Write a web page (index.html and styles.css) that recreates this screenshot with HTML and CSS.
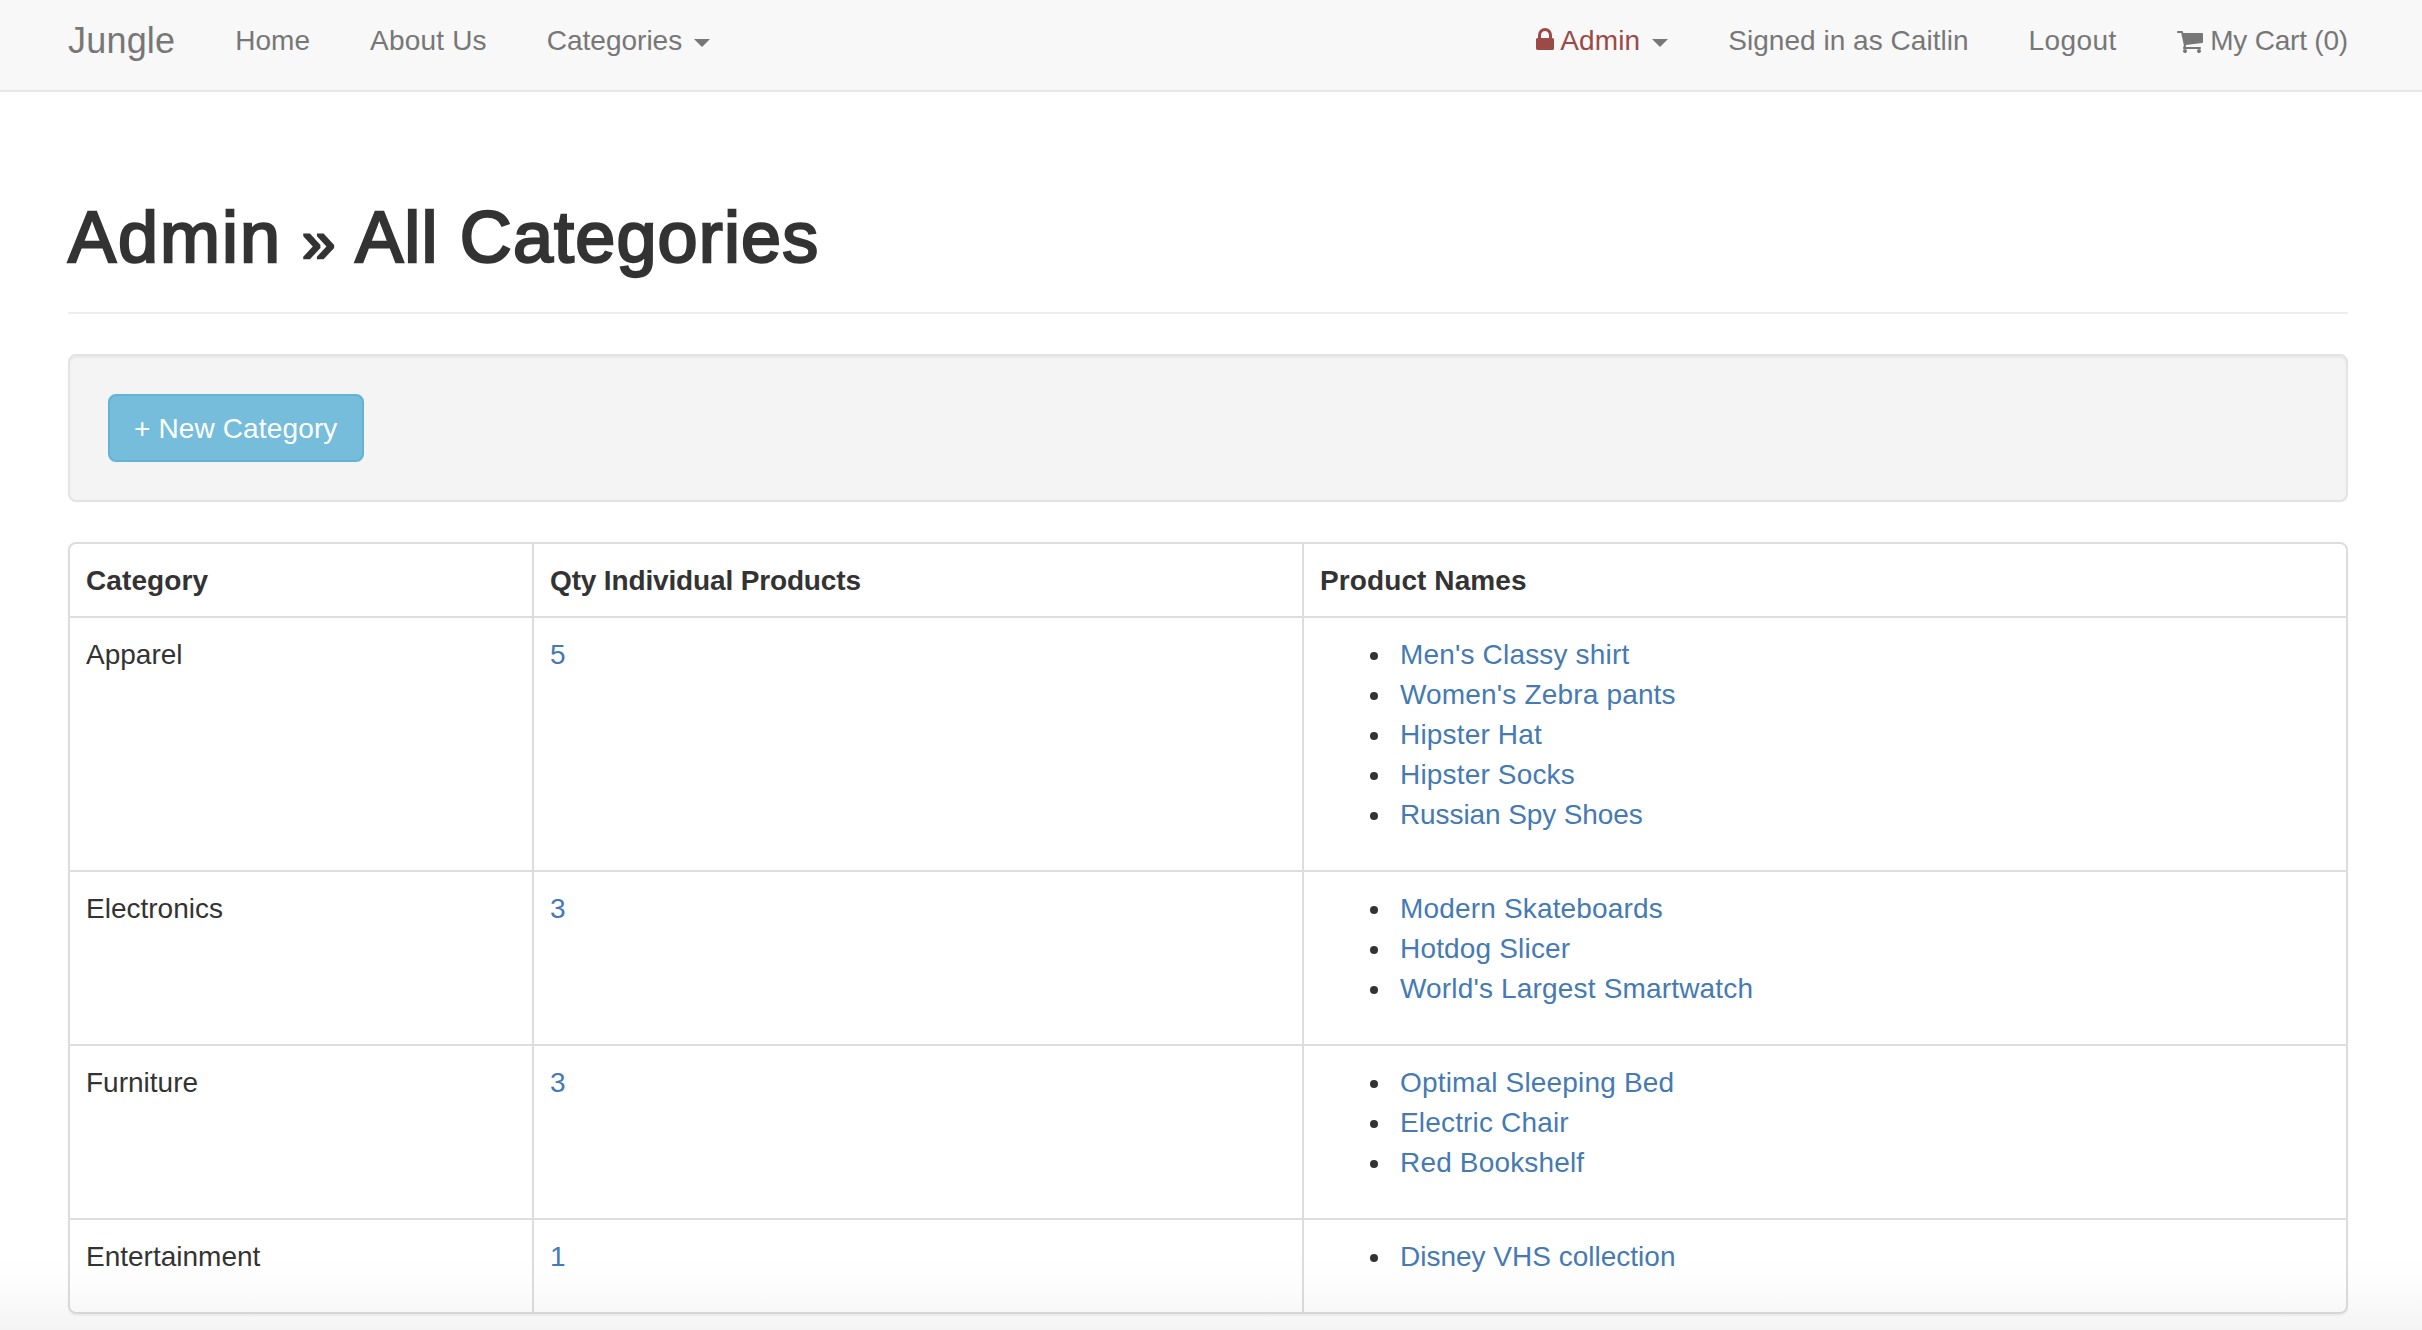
FILE: index.html
```html
<!DOCTYPE html>
<html lang="en">
<head>
<meta charset="utf-8">
<title>Jungle</title>
<link rel="stylesheet" href="styles.css">
</head>
<body>
<header class="navbar">
  <a class="brand">Jungle</a>
  <nav class="nav">
    <a class="home">Home</a>
    <a class="about">About Us</a>
    <a class="categories">Categories <i class="caret"></i></a>
  </nav>
  <nav class="nav nav-right">
    <a class="admin"><span class="danger"><svg class="lock" viewBox="0 0 1152 1536"><path fill="currentColor" d="M320 640h512V448q0-106-75-181t-181-75-181 75-75 181v192zm832 96v576q0 40-28 68t-68 28H96q-40 0-68-28t-28-68V736q0-40 28-68t68-28h32V448q0-184 132-316T576 0t316 132 132 316v192h32q40 0 68 28t28 68z"/></svg> Admin</span> <i class="caret"></i></a>
    <a class="signed">Signed in as Caitlin</a>
    <a class="logout">Logout</a>
    <a class="my-cart"><svg class="cart" viewBox="0 0 1664 1536"><path fill="currentColor" d="M640 1408q0 52-38 90t-90 38-90-38-38-90 38-90 90-38 90 38 38 90zm896 0q0 52-38 90t-90 38-90-38-38-90 38-90 90-38 90 38 38 90zm128-1088v512q0 24-16 42.500t-41 21.500L563 1018q13 60 13 70 0 16-24 64h920q26 0 45 19t19 45-19 45-45 19H448q-26 0-45-19t-19-45q0-11 8-31.500t16-36 21.500-40T445 1079L268 256H64q-26 0-45-19T0 192t19-45 45-19h256q16 0 28.500 6.500T368 150t13 24.500 8 26 5.500 29.500 4.500 26h1201q26 0 45 19t19 45z"/></svg> My Cart (0)</a>
  </nav>
</header>
<main class="container">
  <div class="page-header"><h1><span class="section">Admin</span> <span class="divider">»</span> <span class="title">All Categories</span></h1></div>
  <div class="well"><a class="btn">+ New Category</a></div>
  <div class="panel">
    <table class="table">
      <colgroup><col class="col-category"><col class="col-qty"><col></colgroup>
      <thead>
        <tr><th>Category</th><th class="th-qty">Qty Individual Products</th><th>Product Names</th></tr>
      </thead>
      <tbody>
        <tr>
          <td>Apparel</td><td><a>5</a></td>
          <td><ul><li><a>Men's Classy shirt</a></li><li><a>Women's Zebra pants</a></li><li><a>Hipster Hat</a></li><li><a>Hipster Socks</a></li><li><a class="tight">Russian Spy Shoes</a></li></ul></td>
        </tr>
        <tr>
          <td>Electronics</td><td><a>3</a></td>
          <td><ul><li><a>Modern Skateboards</a></li><li><a>Hotdog Slicer</a></li><li><a>World's Largest Smartwatch</a></li></ul></td>
        </tr>
        <tr>
          <td>Furniture</td><td><a>3</a></td>
          <td><ul><li><a>Optimal Sleeping Bed</a></li><li><a>Electric Chair</a></li><li><a>Red Bookshelf</a></li></ul></td>
        </tr>
        <tr>
          <td>Entertainment</td><td><a>1</a></td>
          <td><ul><li><a class="even">Disney VHS collection</a></li></ul></td>
        </tr>
      </tbody>
    </table>
  </div>
</main>
<div class="bottom-fade"></div>
</body>
</html>
```
FILE: styles.css
```css
* { box-sizing: border-box; }
html, body { height: 1330px; overflow: hidden; }
body {
  margin: 0;
  background: #fff;
  color: #333;
  font: 28px/40px "Helvetica Neue", "Liberation Sans", Arial, sans-serif;
}
.navbar {
  display: flex;
  height: 92px;
  padding: 21px 74px 0 68px;
  background: #f8f8f8;
  border-bottom: 2px solid #e7e7e7;
  color: #777;
  white-space: nowrap;
}
.brand { font-size: 36px; letter-spacing: .2px; margin-right: 60px; }
.nav { display: flex; gap: 60px; }
.nav-right { margin-left: auto; }
.about { letter-spacing: .2px; }
.admin { letter-spacing: .15px; }
.signed { letter-spacing: .03px; }
.logout { letter-spacing: .4px; }
.my-cart { letter-spacing: -.2px; }
.caret {
  display: inline-block;
  margin-left: 4px;
  vertical-align: middle;
  border-top: 8px solid;
  border-left: 8px solid transparent;
  border-right: 8px solid transparent;
}
.danger { color: #9c4a46; }
.lock { width: 18px; height: 24px; vertical-align: -2px; }
.cart { width: 26px; height: 24px; vertical-align: -3px; }

.container { padding: 102px 74px 0 68px; }
.page-header { height: 120px; border-bottom: 2px solid #eee; }
h1 {
  margin: 0;
  padding-top: 4px;
  font-size: 72px;
  line-height: 79px;
  font-weight: 400;
  -webkit-text-stroke: 2.4px #333;
  white-space: nowrap;
}
.section { letter-spacing: 2px; }
.divider { display: inline-block; width: 33px; font-size: 60px; line-height: 60px; }
.title { letter-spacing: 1.15px; }
.well {
  height: 148px;
  margin: 40px 0;
  padding: 38px;
  background: #f4f4f4;
  border: 2px solid #e3e3e3;
  border-radius: 8px;
  box-shadow: inset 0 2px 2px rgba(0, 0, 0, .05);
}
.btn {
  display: inline-block;
  height: 68px;
  padding: 13px 24px 11px;
  border: 2px solid #62b3d5;
  border-radius: 8px;
  background: #75bddb;
  color: #fff;
  letter-spacing: .14px;
}
.panel {
  border: 2px solid #ddd;
  border-radius: 8px;
  box-shadow: 0 2px 2px rgba(0, 0, 0, .05);
}
.table { width: 100%; table-layout: fixed; border-collapse: separate; border-spacing: 0; }
.col-category { width: 464px; }
.col-qty { width: 770px; }
th, td { padding: 17px 16px 15px; text-align: left; vertical-align: top; }
th { letter-spacing: .1px; }
.th-qty { letter-spacing: -.15px; }
td { border-top: 2px solid #ddd; }
th:not(:last-child), td:not(:last-child) { border-right: 2px solid #ddd; }
td a { color: #457ab3; }
ul { margin: 0 0 20px; padding-left: 80px; list-style: none; }
li { position: relative; letter-spacing: .17px; }
li::before {
  content: "";
  position: absolute;
  left: -30px;
  top: 17px;
  width: 8px;
  height: 8px;
  border-radius: 50%;
  background: #333;
}
.tight { letter-spacing: -.1px; }
.even { letter-spacing: 0; }
.bottom-fade {
  position: absolute;
  left: 0;
  right: 0;
  top: 1255px;
  height: 75px;
  background: linear-gradient(rgba(0, 0, 0, 0), rgba(0, 0, 0, .012) 45%, rgba(0, 0, 0, .045));
}
```
